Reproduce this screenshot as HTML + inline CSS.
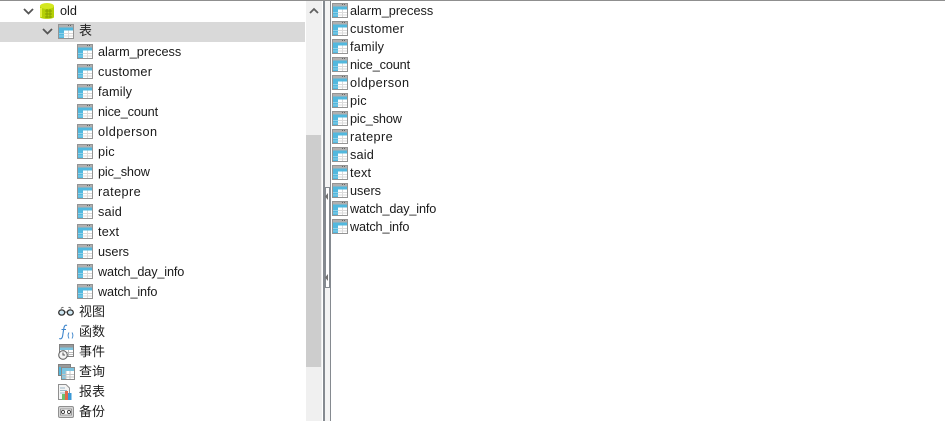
<!DOCTYPE html>
<html><head><meta charset="utf-8">
<style>
html,body{margin:0;padding:0;background:#fff}
body{width:945px;height:421px;position:relative;overflow:hidden;font-family:"Liberation Sans","Noto Sans CJK SC",sans-serif;font-size:13px;color:#1a1a1a}
.a{position:absolute}
.t{position:absolute;line-height:18px;white-space:nowrap;font-size:12.7px}
.c{position:absolute;line-height:18px;white-space:nowrap;font-size:13px;color:#222}
.s1{letter-spacing:.25px}.s2{letter-spacing:.42px}.s3{letter-spacing:-.14px}.s4{letter-spacing:.18px}
svg{position:absolute;overflow:visible}
</style></head><body>
<svg width="0" height="0" style="position:absolute">
<defs>
<g id="tb">
<rect x="0" y="0" width="16" height="15" fill="#949494"/>
<rect x="1" y="1" width="14" height="13" fill="#fff"/>
<rect x="1" y="1" width="14" height="2.500" fill="#b0b0b0"/>
<rect x="10" y="1" width="1" height="1" fill="#666"/><rect x="12" y="1" width="1" height="1" fill="#666"/>
<rect x="1" y="3.500" width="14" height="3" fill="#52b8de"/>
<rect x="1" y="6.500" width="5" height="7.500" fill="#52b8de"/>
<path d="M6 9.500H15M6 12H15" stroke="#dadada" stroke-width="1" fill="none"/>
<path d="M10.500 6.500V14" stroke="#dadada" stroke-width="1" fill="none"/>
<path d="M1 9.500H6M1 12H6" stroke="#8fd0e8" stroke-width="1" fill="none"/>
</g>
</defs>
</svg>

<div class="a" style="left:0;top:0;width:945px;height:1px;background:#8f8f8f"></div>
<div class="a" style="left:0;top:22px;width:305px;height:20px;background:#d9d9d9"></div>

<!-- chevrons -->
<svg style="left:23px;top:8px" width="11" height="7"><path d="M1 1L5.500 5.500L10 1" fill="none" stroke="#555" stroke-width="1.800"/></svg>
<svg style="left:42px;top:28px" width="11" height="7"><path d="M1 1L5.500 5.500L10 1" fill="none" stroke="#555" stroke-width="1.800"/></svg>

<!-- db icon -->
<svg style="left:40px;top:3px" width="14" height="16">
<path d="M0 3V14C0 16.500 14 16.500 14 14V3Z" fill="#b4d006"/>
<ellipse cx="7" cy="3" rx="7" ry="3" fill="#d4e820"/>
<path d="M5 8H12M5 11H12M5 14H12M7 6V15M10 6V15" stroke="#86a000" stroke-width="1" fill="none"/>
<path d="M1 5V14" stroke="#e2f040" stroke-width="2"/>
</svg>
<div class="t" style="left:60px;top:2px">old</div>

<svg style="left:58px;top:24px" width="16" height="15"><use href="#tb"/></svg>
<div class="c" style="left:79px;top:22px">表</div>

<!-- left tree -->
<svg style="left:77px;top:44px" width="16" height="15"><use href="#tb"/></svg><div class="t" style="left:98px;top:43px">alarm_precess</div>
<svg style="left:77px;top:64px" width="16" height="15"><use href="#tb"/></svg><div class="t s1" style="left:98px;top:63px">customer</div>
<svg style="left:77px;top:84px" width="16" height="15"><use href="#tb"/></svg><div class="t s4" style="left:98px;top:83px">family</div>
<svg style="left:77px;top:104px" width="16" height="15"><use href="#tb"/></svg><div class="t s3" style="left:98px;top:103px">nice_count</div>
<svg style="left:77px;top:124px" width="16" height="15"><use href="#tb"/></svg><div class="t s2" style="left:98px;top:123px">oldperson</div>
<svg style="left:77px;top:144px" width="16" height="15"><use href="#tb"/></svg><div class="t s4" style="left:98px;top:143px">pic</div>
<svg style="left:77px;top:164px" width="16" height="15"><use href="#tb"/></svg><div class="t s3" style="left:98px;top:163px">pic_show</div>
<svg style="left:77px;top:184px" width="16" height="15"><use href="#tb"/></svg><div class="t s2" style="left:98px;top:183px">ratepre</div>
<svg style="left:77px;top:204px" width="16" height="15"><use href="#tb"/></svg><div class="t s4" style="left:98px;top:203px">said</div>
<svg style="left:77px;top:224px" width="16" height="15"><use href="#tb"/></svg><div class="t s4" style="left:98px;top:223px">text</div>
<svg style="left:77px;top:244px" width="16" height="15"><use href="#tb"/></svg><div class="t" style="left:98px;top:243px">users</div>
<svg style="left:77px;top:264px" width="16" height="15"><use href="#tb"/></svg><div class="t s3" style="left:98px;top:263px">watch_day_info</div>
<svg style="left:77px;top:284px" width="16" height="15"><use href="#tb"/></svg><div class="t s3" style="left:98px;top:283px">watch_info</div>

<!-- glasses -->
<svg style="left:58px;top:306px" width="16" height="10"><path d="M3 2.500Q4 1 5.500 1.500M13 2.500Q12 1 10.500 1.500M6.500 6H9.500" stroke="#666" fill="none"/><ellipse cx="3.700" cy="6.500" rx="3" ry="2.600" fill="#cfe8f4" stroke="#333" stroke-width="1.300"/><ellipse cx="12.300" cy="6.500" rx="3" ry="2.600" fill="#cfe8f4" stroke="#333" stroke-width="1.300"/></svg>
<div class="c" style="left:79px;top:303px">视图</div>
<!-- fn -->
<svg style="left:58px;top:324px" width="17" height="16"><path d="M9 1.500C7 .3 6 2.500 5.700 5L4.700 11.500C4.400 14 3.200 15.500 1.200 14.500M3.500 5.500H8" fill="none" stroke="#3f86cc" stroke-width="1.100"/><path d="M11 8.500C9.800 10.500 9.800 12.500 11 14.500M14 8.500C15.200 10.500 15.200 12.500 14 14.500" fill="none" stroke="#3f86cc" stroke-width=".9"/></svg>
<div class="c" style="left:79px;top:323px">函数</div>
<!-- event -->
<svg style="left:58px;top:344px" width="17" height="16"><rect x="1.500" y=".5" width="14" height="12" fill="#fff" stroke="#808080"/><rect x="2" y="1" width="13" height="2.500" fill="#9a9a9a"/><rect x="2" y="3.500" width="13" height="2.500" fill="#7cc4e0"/><path d="M2 8.500H15M2 10.500H15M6 6V12M10.500 6V12" stroke="#bbb" fill="none"/><circle cx="5" cy="11" r="4.300" fill="#f4f4f4" stroke="#666" stroke-width="1.100"/><path d="M5 8.500V11H7" stroke="#555" fill="none"/></svg>
<div class="c" style="left:79px;top:343px">事件</div>
<!-- query -->
<svg style="left:58px;top:364px" width="17" height="16"><rect x=".5" y=".5" width="12" height="11" fill="#e0e0e0" stroke="#808080"/><rect x="1" y="1" width="11" height="2" fill="#9a9a9a"/><rect x="1" y="3" width="3" height="8" fill="#52b8de"/><rect x="3.500" y="3.500" width="13" height="12" fill="#fff" stroke="#8a8a8a"/><rect x="4" y="4" width="12" height="3" fill="#7cc4e0"/><rect x="4" y="7" width="4" height="8" fill="#7cc4e0"/><path d="M4 10.500H16M4 13H16M8 7V15M12 7V15" stroke="#c4c4c4" fill="none"/></svg>
<div class="c" style="left:79px;top:363px">查询</div>
<!-- report -->
<svg style="left:58px;top:384px" width="16" height="16"><path d="M.5 .5H8L11.500 4V15.500H.5Z" fill="#f4f4f4" stroke="#8f8f8f"/><path d="M2 4H7M2 6.500H9M2 9H9" stroke="#9bb7c8" fill="none"/><rect x="4" y="10" width="3" height="6" fill="#6cc070"/><rect x="7" y="7" width="3" height="9" fill="#e2684a"/><rect x="10" y="9" width="3.500" height="7" fill="#3a98d6"/></svg>
<div class="c" style="left:79px;top:383px">报表</div>
<!-- backup -->
<svg style="left:58px;top:406px" width="16" height="12"><rect x=".5" y=".5" width="15" height="11" rx="1.500" fill="#d8d8d8" stroke="#909090"/><rect x="2.500" y="3" width="11" height="6" fill="#fff" stroke="#888" stroke-width=".8"/><circle cx="5" cy="6" r="1.600" fill="none" stroke="#444"/><circle cx="11" cy="6" r="1.600" fill="none" stroke="#444"/></svg>
<div class="c" style="left:79px;top:403px">备份</div>

<!-- scrollbar -->
<div class="a" style="left:306px;top:1px;width:16px;height:420px;background:#f0f0f0"></div>
<div class="a" style="left:306px;top:135px;width:15px;height:232px;background:#cdcdcd"></div>
<svg style="left:309px;top:7px" width="10" height="7"><path d="M1 6L5 2L9 6" fill="none" stroke="#606060" stroke-width="1.800"/></svg>

<!-- splitter -->
<div class="a" style="left:323px;top:1px;width:1.500px;height:420px;background:#858a90"></div>
<div class="a" style="left:325px;top:1px;width:5px;height:420px;background:#f4f4f4"></div>
<div class="a" style="left:330px;top:1px;width:1px;height:420px;background:#858a90"></div>
<div class="a" style="left:324px;top:187px;width:6px;height:99px;background:#fff;border-top:1px solid #858a90;border-bottom:1px solid #858a90"></div>
<div class="a" style="left:324px;top:188px;width:2px;height:99px;background:#858a90"></div>
<div class="a" style="left:329px;top:188px;width:1px;height:99px;background:#858a90"></div>
<svg style="left:325px;top:192px" width="5" height="9"><path d="M0 4.500L3 1V8Z" fill="#707070"/></svg>
<svg style="left:325px;top:273px" width="5" height="9"><path d="M0 4.500L3 1V8Z" fill="#707070"/></svg>

<!-- right list -->
<svg style="left:332px;top:3px" width="16" height="15"><use href="#tb"/></svg><div class="t" style="left:350px;top:2px">alarm_precess</div>
<svg style="left:332px;top:21px" width="16" height="15"><use href="#tb"/></svg><div class="t s1" style="left:350px;top:20px">customer</div>
<svg style="left:332px;top:39px" width="16" height="15"><use href="#tb"/></svg><div class="t s4" style="left:350px;top:38px">family</div>
<svg style="left:332px;top:57px" width="16" height="15"><use href="#tb"/></svg><div class="t s3" style="left:350px;top:56px">nice_count</div>
<svg style="left:332px;top:75px" width="16" height="15"><use href="#tb"/></svg><div class="t s2" style="left:350px;top:74px">oldperson</div>
<svg style="left:332px;top:93px" width="16" height="15"><use href="#tb"/></svg><div class="t s4" style="left:350px;top:92px">pic</div>
<svg style="left:332px;top:111px" width="16" height="15"><use href="#tb"/></svg><div class="t s3" style="left:350px;top:110px">pic_show</div>
<svg style="left:332px;top:129px" width="16" height="15"><use href="#tb"/></svg><div class="t s2" style="left:350px;top:128px">ratepre</div>
<svg style="left:332px;top:147px" width="16" height="15"><use href="#tb"/></svg><div class="t s4" style="left:350px;top:146px">said</div>
<svg style="left:332px;top:165px" width="16" height="15"><use href="#tb"/></svg><div class="t s4" style="left:350px;top:164px">text</div>
<svg style="left:332px;top:183px" width="16" height="15"><use href="#tb"/></svg><div class="t" style="left:350px;top:182px">users</div>
<svg style="left:332px;top:201px" width="16" height="15"><use href="#tb"/></svg><div class="t s3" style="left:350px;top:200px">watch_day_info</div>
<svg style="left:332px;top:219px" width="16" height="15"><use href="#tb"/></svg><div class="t s3" style="left:350px;top:218px">watch_info</div>
</body></html>
